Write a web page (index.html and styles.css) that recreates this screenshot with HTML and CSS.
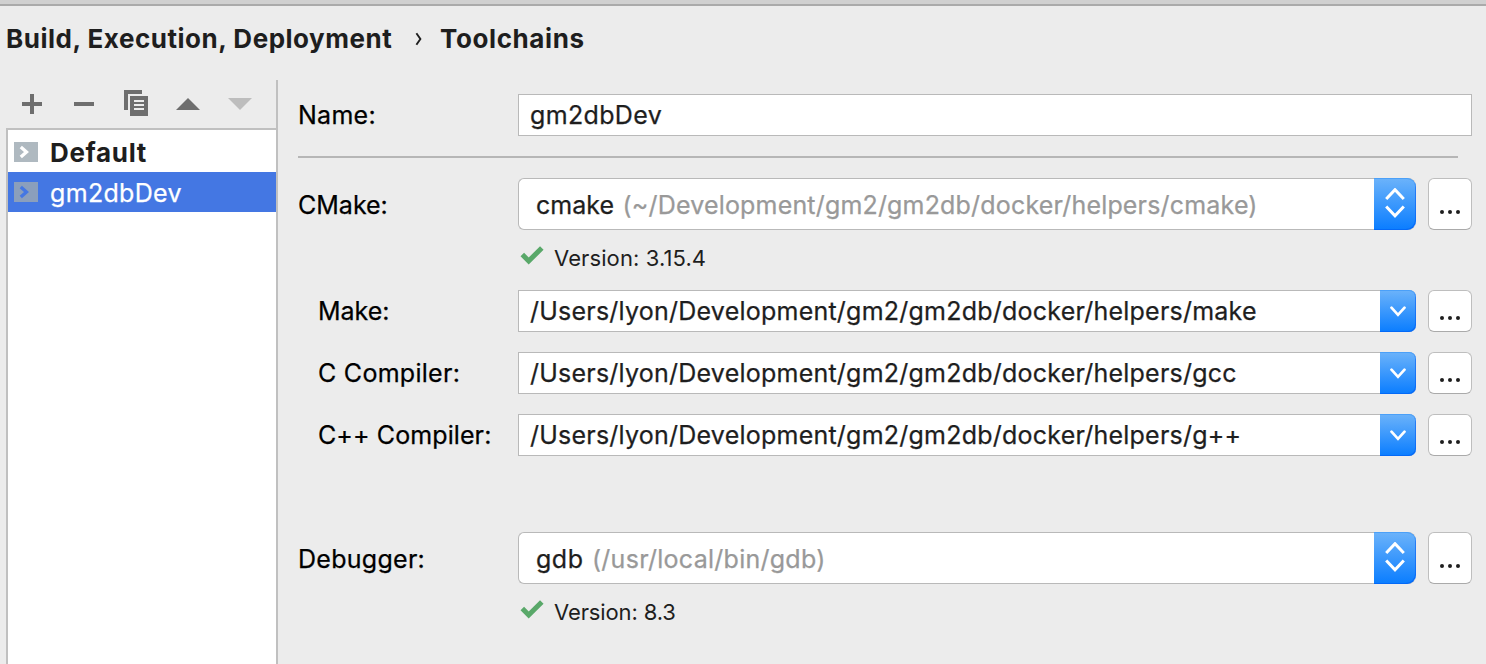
FILE: index.html
```html
<!DOCTYPE html>
<html lang="en">
<head>
<meta charset="utf-8">
<title>Toolchains</title>
<link rel="stylesheet" href="styles.css">
</head>
<body>
<div class="window">
  <div class="titlebar-edge"></div>
  <header class="breadcrumb">
    <span class="crumb-parent">Build, Execution, Deployment</span>
    <svg class="crumb-sep" width="8" height="14" viewBox="0 0 8 14"><path d="M1.4 1.2L5.4 7L1.4 12.8" fill="none" stroke="#1e1e1e" stroke-width="1.9"/></svg>
    <span class="crumb-page">Toolchains</span>
  </header>
  <main class="content">
    <aside class="sidebar">
      <div class="toolbar">
        <svg width="32" height="32" viewBox="0 0 32 32"><path d="M6 14H14V6H18V14H26V18H18V26H14V18H6Z" fill="#6e6e6e"/></svg>
        <svg width="32" height="32" viewBox="0 0 32 32"><path d="M6 14H26V18H6Z" fill="#6e6e6e"/></svg>
        <svg width="32" height="32" viewBox="0 0 32 32"><path d="M4 2H22V6H8V22H4ZM10 8H28V28H10ZM14 12V14H24V12ZM14 16V18H24V16ZM14 20V22H24V20Z" fill="#6e6e6e" fill-rule="evenodd"/></svg>
        <svg width="32" height="32" viewBox="0 0 32 32"><path d="M4 22L16 10L28 22Z" fill="#6e6e6e"/></svg>
        <svg width="32" height="32" viewBox="0 0 32 32"><path d="M4 10H28L16 22Z" fill="#bdbdbd"/></svg>
      </div>
      <ul class="list">
        <li class="item item-default">
          <svg width="24" height="20" viewBox="0 0 24 20"><path d="M0 0H24V20H0Z" fill="#afb9c0"/><path d="M6.8 4.9L12.5 10L6.8 15.1" fill="none" stroke="#fff" stroke-width="3.3"/></svg>
          <span class="item-name">Default</span>
        </li>
        <li class="item item-selected">
          <svg width="24" height="20" viewBox="0 0 24 20"><path d="M0 0H24V20H0Z" fill="#8b9fbc"/><path d="M6.8 4.9L12.5 10L6.8 15.1" fill="none" stroke="#4477e3" stroke-width="3.3"/></svg>
          <span class="item-name">gm2dbDev</span>
        </li>
      </ul>
    </aside>
    <section class="form">
      <div class="row">
        <label class="label">Name:</label>
        <div class="field"><span class="value-name">gm2dbDev</span></div>
      </div>
      <div class="separator"></div>
      <div class="row row-tall">
        <label class="label label-tight">CMake:</label>
        <div class="select"><span class="value">cmake</span><span class="hint">(~/Development/gm2/gm2db/docker/helpers/cmake)</span>
          <span class="stepper"><svg width="20" height="30" viewBox="0 0 20 30"><path d="M1.2 11L10 1.7L18.8 11M1.2 18.5L10 27.8L18.8 18.5" fill="none" stroke="#fff" stroke-width="3"/></svg></span>
        </div>
        <button class="browse"><i></i><i></i><i></i></button>
      </div>
      <div class="status">
        <svg width="24" height="20" viewBox="0 0 24 20"><path d="M2.3 9.5L8.7 16L21.8 3" fill="none" stroke="#59a869" stroke-width="5"/></svg>
        <span class="version">Version: 3.15.4</span>
      </div>
      <div class="row sub first-sub">
        <label class="label label-tight">Make:</label>
        <div class="combo"><span class="path">/Users/lyon/Development/gm2/gm2db/docker/helpers/make</span>
          <span class="drop"><svg width="16" height="11" viewBox="0 0 16 11"><path d="M1.5 1.7L8 8.8L14.5 1.7" fill="none" stroke="#fff" stroke-width="2.7" stroke-linecap="round"/></svg></span>
        </div>
        <button class="browse"><i></i><i></i><i></i></button>
      </div>
      <div class="row sub">
        <label class="label">C Compiler:</label>
        <div class="combo"><span class="path">/Users/lyon/Development/gm2/gm2db/docker/helpers/gcc</span>
          <span class="drop"><svg width="16" height="11" viewBox="0 0 16 11"><path d="M1.5 1.7L8 8.8L14.5 1.7" fill="none" stroke="#fff" stroke-width="2.7" stroke-linecap="round"/></svg></span>
        </div>
        <button class="browse"><i></i><i></i><i></i></button>
      </div>
      <div class="row sub">
        <label class="label label-snug">C++ Compiler:</label>
        <div class="combo"><span class="path">/Users/lyon/Development/gm2/gm2db/docker/helpers/g++</span>
          <span class="drop"><svg width="16" height="11" viewBox="0 0 16 11"><path d="M1.5 1.7L8 8.8L14.5 1.7" fill="none" stroke="#fff" stroke-width="2.7" stroke-linecap="round"/></svg></span>
        </div>
        <button class="browse"><i></i><i></i><i></i></button>
      </div>
      <div class="row row-tall debugger">
        <label class="label">Debugger:</label>
        <div class="select"><span class="value value-short">gdb</span><span class="hint hint-short">(/usr/local/bin/gdb)</span>
          <span class="stepper"><svg width="20" height="30" viewBox="0 0 20 30"><path d="M1.2 11L10 1.7L18.8 11M1.2 18.5L10 27.8L18.8 18.5" fill="none" stroke="#fff" stroke-width="3"/></svg></span>
        </div>
        <button class="browse"><i></i><i></i><i></i></button>
      </div>
      <div class="status">
        <svg width="24" height="20" viewBox="0 0 24 20"><path d="M2.3 9.5L8.7 16L21.8 3" fill="none" stroke="#59a869" stroke-width="5"/></svg>
        <span class="version version-short">Version: 8.3</span>
      </div>
    </section>
  </main>
</div>
</body>
</html>
```
FILE: styles.css
```css
* { box-sizing: border-box; }
body {
  margin: 0;
  background: #ececec;
  color: #1e1e1e;
  font-family: Inter, "Liberation Sans", sans-serif;
  font-size: 25px;
  line-height: 32px;
  white-space: nowrap;
  -webkit-text-stroke: .25px;
}
.window { display: flex; flex-direction: column; height: 664px; overflow: hidden; }
.titlebar-edge { flex: none; height: 6px; background: #d0d0d0; border-bottom: 2px solid #aaa; }
.breadcrumb {
  flex: none; display: flex; align-items: center;
  height: 74px; padding: 0 0 8px 6px; font-weight: 700; font-size: 26px;
  -webkit-text-stroke: 0;
}
.crumb-parent { width: 409px; letter-spacing: .52px; }
.crumb-sep { margin-right: 17px; }
.crumb-page { letter-spacing: .6px; }
.content { flex: 1; display: flex; min-height: 0; }

.sidebar { width: 278px; display: flex; flex-direction: column; border-right: 2px solid #c0c0c0; }
.toolbar { height: 48px; display: flex; align-items: center; gap: 20px; padding-left: 16px; }
.list { flex: 1; list-style: none; margin: 0 0 0 6px; padding: 0; background: #fff; border: solid #c0c0c0; border-width: 2px 0 0 2px; }
.item { display: flex; align-items: center; height: 40px; padding-left: 6px; gap: 12px; letter-spacing: .33px; }
.item-default { height: 42px; padding-top: 2px; font-weight: 700; font-size: 26px; letter-spacing: .65px; -webkit-text-stroke: 0; }
.item-name { padding-top: 1px; }
.item-default .item-name { padding-top: 2px; }
.item-selected { background: #4477e3; color: #fff; }

.form { flex: 1; padding: 14px 14px 0 20px; }
.row { display: flex; align-items: center; height: 42px; }
.row-tall { height: 52px; }
.label { width: 220px; color: #000; letter-spacing: .28px; }
.label-tight { letter-spacing: 0; }
.label-snug { letter-spacing: .1px; }
.row-tall .label, .value, .hint { padding-top: 2px; }
.sub { padding-left: 20px; margin-top: 20px; }
.sub .label { width: 200px; }
.first-sub { margin-top: 4px; }
.field, .combo, .select { flex: 1; display: flex; align-items: center; height: 100%; background: #fff; border: 1px solid #b9b9b9; }
.field { padding-left: 11px; letter-spacing: .35px; }
.combo { padding-left: 11px; border-right: 0; border-radius: 0 7px 7px 0; }
.path { letter-spacing: .23px; }
.select { padding-left: 17px; border-right: 0; border-radius: 6px 8px 8px 6px; }
.value-short { letter-spacing: .5px; }
.hint { margin-left: 8.5px; color: #999; letter-spacing: .18px; }
.hint-short { letter-spacing: .27px; }
.separator { height: 2px; margin: 20px 14px 20px 0; background: #b6b6b6; }
.drop, .stepper {
  display: flex; align-items: center; justify-content: center;
  margin: -1px 0 -1px auto; width: 36px; height: 42px;
  padding: 1px 1px 0 0;
  border-radius: 0 7px 7px 0;
  background: linear-gradient(#6cb3fa, #0a7dff);
  box-shadow: inset 0 1px #4ba0f8, inset -1px -1px rgba(0, 90, 240, .55);
}
.stepper { width: 42px; height: 52px; border-radius: 0 9px 9px 0; padding: 0 1px 3px 0; }
.browse {
  display: flex; align-items: flex-end; justify-content: center; gap: 4px;
  width: 44px; height: 100%; margin: 0 0 0 12px; padding: 0 0 11px;
  background: #fff; border: 1px solid #bebebe; border-bottom-color: #aaa; border-radius: 6px;
}
.row-tall .browse { padding-bottom: 15px; }
.browse i { width: 4px; height: 4px; border-radius: 2px; background: #1e1e1e; }
.status { display: flex; align-items: center; height: 56px; padding-left: 222px; gap: 10px; font-size: 22px; -webkit-text-stroke: 0; }
.status svg { margin-top: -6px; }
.version { letter-spacing: .1px; }
.version-short { letter-spacing: -.12px; }
.debugger { margin-top: 76px; }
```
